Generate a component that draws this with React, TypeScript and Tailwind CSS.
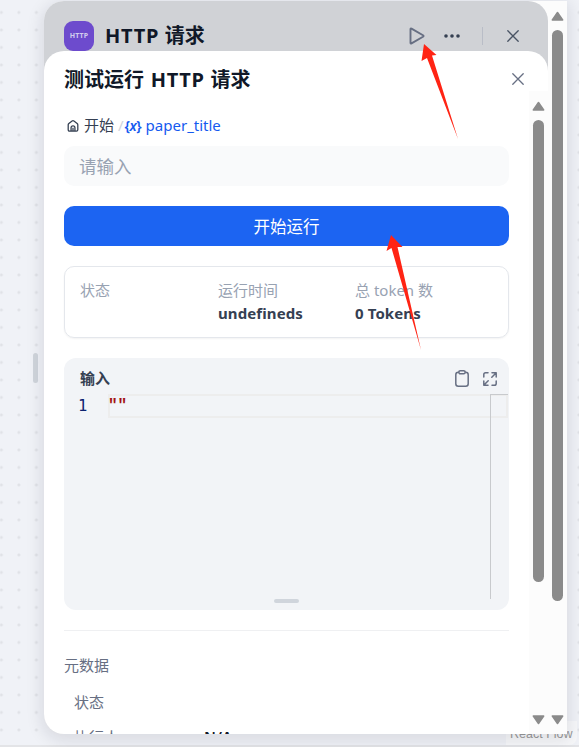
import React from "react";

function CloseIcon() {
  return (
    <svg width="12" height="12" viewBox="0 0 12 12" fill="none" stroke="currentColor" strokeWidth="1.3" strokeLinecap="round">
      <path d="M.8.8l10.4 10.4M11.2.8L.8 11.2" />
    </svg>
  );
}

function Scrollbar({ thumb }: { thumb: string }) {
  return (
    <div className="flex h-full w-[19px] shrink-0 flex-col bg-[#fcfcfc] pl-[4px] text-[#8b8b8b]">
      <svg className="mt-[10px] -ml-[1px] shrink-0" width="13" height="10" viewBox="0 0 13 10">
        <path d="M6.5 1.5L11.700 9H1.300z" fill="currentColor" stroke="currentColor" strokeWidth="1.5" strokeLinejoin="round" />
      </svg>
      <div className={`mt-[9px] w-[11px] shrink-0 rounded-full bg-[#8b8b8b] ${thumb}`} />
      <svg className="mt-auto -ml-[1px] mb-[9px] shrink-0" width="13" height="10" viewBox="0 0 13 10">
        <path d="M6.5 8.5L11.700 1H1.300z" fill="currentColor" stroke="currentColor" strokeWidth="1.5" strokeLinejoin="round" />
      </svg>
    </div>
  );
}

function Stat({ label, value, width }: { label: string; value?: string; width: string }) {
  return (
    <div className={`whitespace-nowrap text-[15px] leading-[23px] ${width}`}>
      <div className="text-[#98a2b2]">{label}</div>
      <div className="font-bold tracking-[0.100px] text-[#354052]">{value}</div>
    </div>
  );
}

function Editor() {
  return (
    <section className="mt-5 flex h-[252px] flex-col overflow-hidden rounded-[12px] bg-[#f2f4f7]">
      <div className="flex h-9 shrink-0 items-center pt-[5px] pr-[12px] pl-4 text-[#676f83]">
        <span className="text-[15px] font-bold text-[#354052]">输入</span>
        <svg className="ml-auto" width="14" height="17" viewBox="0 0 14 17" fill="none" stroke="currentColor" strokeWidth="1.5">
          <rect x=".8" y="2.2" width="12.4" height="14" rx="2.5" />
          <rect x="3.8" y=".8" width="6.4" height="3" rx="1.5" fill="#f2f4f7" />
        </svg>
        <svg className="ml-[14px]" width="14" height="14" viewBox="0 0 14 14" fill="none" stroke="currentColor" strokeWidth="1.5" strokeLinecap="round" strokeLinejoin="round">
          <path d="M9 .8h4.2V5M13 1L8.8 5.2M5 13.2H.8V9M1 13l4.2-4.2M5 .8H2.6Q.8.8.8 2.6V5M9 13.2h2.4q1.8 0 1.8-1.8V9" />
        </svg>
      </div>
      <div className="flex min-h-0 flex-1">
        <div className="w-[44px] shrink-0 pl-[14px] font-['DejaVu_Sans_Mono',monospace] text-[15.5px] leading-[24px] text-[#0b216f]">1</div>
        <div className="flex h-[205px] flex-1 justify-end">
          <div className="h-[24px] flex-1 border-y-2 border-l-2 border-[#ededed] font-['Liberation_Mono',monospace] text-[16px] leading-[20px] font-bold text-[#a31515]"><span className="-ml-[2px]">""</span></div>
          <div className="mr-px h-full w-[18px] border-t border-l border-[#c8cacd]">
            <div className="h-[23px] border-t border-r-2 border-b-2 border-[#ededed]" />
          </div>
        </div>
      </div>
      <div className="mx-auto mb-[7px] h-1 w-[25px] shrink-0 rounded-full bg-[#d0d5dc]" />
    </section>
  );
}

function RunPanel() {
  return (
    <div className="flex min-h-0 flex-1 flex-col overflow-hidden rounded-t-[20px] bg-white">
      <div className="flex h-10 shrink-0 items-center pt-4 pr-6 pl-5">
        <h2 className="whitespace-nowrap pt-px text-[20px] font-bold text-[#101828]">测试运行 <span className="ml-[1.500px] tracking-[0.700px]">HTTP</span> <span className="ml-[0.500px]">请求</span></h2>
        <span className="ml-auto text-[#676f83]"><CloseIcon /></span>
      </div>
      <div className="flex min-h-0 flex-1">
        <div className="min-w-0 flex-1 overflow-hidden pr-5 pl-5">
          <div className="mt-[23px] flex h-[22px] items-center whitespace-nowrap text-[15px]">
            <svg className="mt-[2px] ml-[3px]" width="12" height="12" viewBox="0 0 12 13" fill="none" stroke="#354052" strokeWidth="1.4" strokeLinejoin="round">
              <path d="M.8 5.2Q.8 4.4 1.5 3.8L5 1.1q1-.7 2 0l3.500 2.700q.7.600.7 1.400V10.500q0 1.500-1.500 1.500H2.300Q.8 12 .8 10.500zM3.900 12V8.500a2.100 2.100 0 0 1 4.200 0V12M6 8.500V12" />
            </svg>
            <span className="ml-[5px] text-[#354052]">开始</span>
            <span className="ml-[4px] text-[#d0d5dc]">/</span>
            <span className="ml-px w-[17px] text-[14px] font-semibold tracking-[-0.500px] text-[#155aef]">{"{"}<i>x</i>{"}"}</span>
            <span className="ml-[4px] text-[#155aef]">paper_title</span>
          </div>
          <div className="mt-[10px] flex h-10 items-center rounded-[10px] bg-[#f9fafb] px-[15px] text-[17.5px] text-[#98a2b2]">请输入</div>
          <button className="mt-5 flex h-10 w-full items-center justify-center rounded-[10px] bg-[#1c64f2] pt-[3px] text-[16.500px] text-white">开始运行</button>
          <section className="mt-5 flex h-[72px] rounded-[10px] border border-[#e4e7ec] px-[15px] pt-[12px] shadow-xs">
            <Stat label="状态" width="w-[138px]" />
            <Stat label="运行时间" value="undefineds" width="w-[137px]" />
            <Stat label="总 token 数" value="0 Tokens" width="w-[120px]" />
          </section>
          <Editor />
          <div className="mt-5 h-px bg-[#eff0f2]" />
          <div className="mt-[23px] text-[15px] leading-[23px] text-[#676f83]">元数据</div>
          <div className="mt-[14px] pl-[10px] text-[15px] leading-[23px] text-[#676f83]">状态</div>
          <div className="mt-[12px] flex pl-[10px] text-[15px] leading-[23px] text-[#676f83]">
            <span className="w-[130px]">执行人</span>
            <span className="-mt-px font-semibold text-[#101828]">N/A</span>
          </div>
        </div>
        <Scrollbar thumb="h-[462px]" />
      </div>
    </div>
  );
}

export default function App() {
  return (
    <div className="relative h-[747px] w-[579px] overflow-hidden bg-[#f0f2f7] bg-[radial-gradient(circle,#e0e2e7_1.3px,transparent_1.7px)] bg-[size:17.500px_17.500px] bg-[position:-7.400px_-13.800px] font-['Noto_Sans','Noto_Sans_CJK_SC',sans-serif]">
      <div className="absolute inset-x-0 bottom-0 h-[2px] bg-[#e3e4e7]" />
      <div className="absolute right-[2px] bottom-[2px] h-6 w-[71px] rounded-br-[8px] bg-[#f7f8fa] pl-[4px] text-[12.500px] leading-[27px] whitespace-nowrap text-[#999] font-['Liberation_Sans',sans-serif]">React Flow</div>
      <div className="flex pt-px">
        <div className="flex h-[733px] w-11 shrink-0 items-center justify-end pr-[6px]">
          <div className="h-[30px] w-[5px] rounded-full bg-[#d0d5dc]" />
        </div>
        <div className="relative flex h-[733px] w-[523px] overflow-hidden rounded-l-[20px] bg-[#fcfcfc] shadow-[0_4px_16px_3px_rgba(16,24,40,0.10)]">
          <div className="flex w-[504px] flex-col rounded-tr-[20px] bg-[#d0d2d6]">
            <header className="flex h-[50px] shrink-0 items-center pt-5 pr-[29px] pl-5">
              <div className="flex size-[30px] shrink-0 items-center justify-center rounded-[9px] bg-[#6d4bcd] text-[7px] font-bold tracking-[0.200px] text-[#d2cbed]">HTTP</div>
              <h1 className="ml-[11px] whitespace-nowrap text-[20px] font-bold text-[#101828]"><span className="tracking-[0.700px]">HTTP</span> <span className="ml-[0.500px]">请求</span></h1>
              <svg className="ml-auto" width="16" height="18" viewBox="0 0 16 18" fill="none" stroke="#676f83" strokeWidth="1.9" strokeLinejoin="round">
                <path d="M1.500 2.200q0-1.200 1-.6l11.500 6.600q1.200.8 0 1.600l-11.500 6.600q-1 .6-1-.6z" />
              </svg>
              <svg className="ml-[19px]" width="16" height="4" viewBox="0 0 16 4" fill="#354052">
                <circle cx="2" cy="2" r="1.800" /><circle cx="8" cy="2" r="1.800" /><circle cx="14" cy="2" r="1.800" />
              </svg>
              <div className="mr-[24px] ml-[22px] h-[18px] w-px bg-[#b9bdc7]" />
              <span className="text-[#495464]"><CloseIcon /></span>
            </header>
            <RunPanel />
          </div>
          <Scrollbar thumb="h-[571px]" />
        </div>
      </div>
      <svg className="pointer-events-none absolute inset-0" width="579" height="747" fill="#ff2414">
        <path d="M424 44L436.500 55L432 55.500L458 139L427 58L421.500 61z" />
        <path d="M391 235L402.500 247L397.500 247L421 350L391.500 248L386.500 251z" />
      </svg>
    </div>
  );
}
